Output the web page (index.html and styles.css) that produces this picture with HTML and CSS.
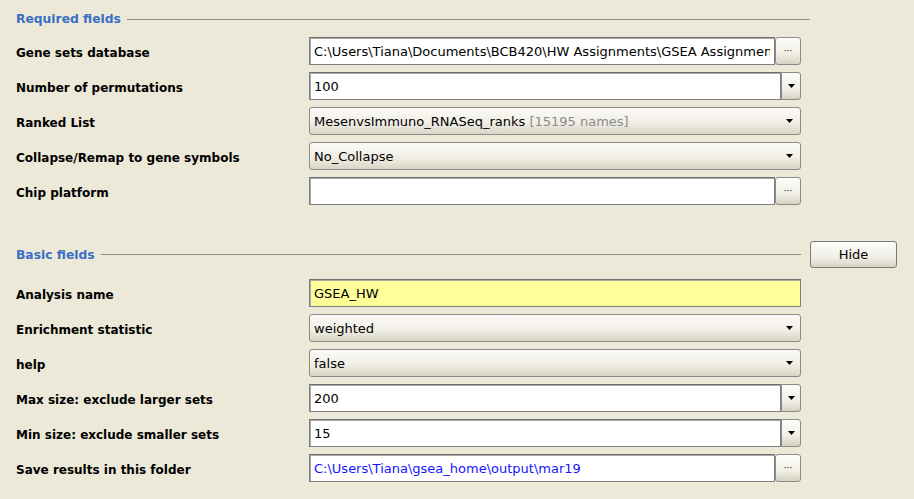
FILE: index.html
```html
<!DOCTYPE html>
<html>
<head>
<meta charset="utf-8">
<link rel="stylesheet" href="styles.css">
</head>
<body>
<div class="panel">
  <div class="section-head req">
    <span class="title">Required fields</span>
    <span class="rule"></span>
  </div>

  <div class="row">
    <div class="label">Gene sets database</div>
    <div class="ctrl">
      <div class="text-field"><span class="clip">C:\Users\Tiana\Documents\BCB420\HW Assignments\GSEA Assignments</span></div>
      <div class="dots-btn"><span>···</span></div>
    </div>
  </div>

  <div class="row">
    <div class="label">Number of permutations</div>
    <div class="ctrl">
      <div class="text-field">100</div>
      <div class="arrow-btn"><svg width="7" height="5" viewBox="0 0 7 5"><path d="M0 0H7L3.5 4Z" fill="#000"/></svg></div>
    </div>
  </div>

  <div class="row">
    <div class="label">Ranked List</div>
    <div class="ctrl">
      <div class="combo"><span>MesenvsImmuno_RNASeq_ranks <span class="muted">[15195 names]</span></span>
        <svg width="7" height="5" viewBox="0 0 7 5"><path d="M0 0H7L3.5 4Z" fill="#000"/></svg></div>
    </div>
  </div>

  <div class="row">
    <div class="label">Collapse/Remap to gene symbols</div>
    <div class="ctrl">
      <div class="combo"><span>No_Collapse</span>
        <svg width="7" height="5" viewBox="0 0 7 5"><path d="M0 0H7L3.5 4Z" fill="#000"/></svg></div>
    </div>
  </div>

  <div class="row">
    <div class="label">Chip platform</div>
    <div class="ctrl">
      <div class="text-field"></div>
      <div class="dots-btn"><span>···</span></div>
    </div>
  </div>

  <div class="section-head basic">
    <span class="title">Basic fields</span>
    <span class="rule short"></span>
    <button class="hide-btn">Hide</button>
  </div>

  <div class="row">
    <div class="label">Analysis name</div>
    <div class="ctrl">
      <div class="text-field yellow">GSEA_HW</div>
    </div>
  </div>

  <div class="row">
    <div class="label">Enrichment statistic</div>
    <div class="ctrl">
      <div class="combo"><span>weighted</span>
        <svg width="7" height="5" viewBox="0 0 7 5"><path d="M0 0H7L3.5 4Z" fill="#000"/></svg></div>
    </div>
  </div>

  <div class="row">
    <div class="label">help</div>
    <div class="ctrl">
      <div class="combo"><span>false</span>
        <svg width="7" height="5" viewBox="0 0 7 5"><path d="M0 0H7L3.5 4Z" fill="#000"/></svg></div>
    </div>
  </div>

  <div class="row">
    <div class="label">Max size: exclude larger sets</div>
    <div class="ctrl">
      <div class="text-field">200</div>
      <div class="arrow-btn"><svg width="7" height="5" viewBox="0 0 7 5"><path d="M0 0H7L3.5 4Z" fill="#000"/></svg></div>
    </div>
  </div>

  <div class="row">
    <div class="label">Min size: exclude smaller sets</div>
    <div class="ctrl">
      <div class="text-field">15</div>
      <div class="arrow-btn"><svg width="7" height="5" viewBox="0 0 7 5"><path d="M0 0H7L3.5 4Z" fill="#000"/></svg></div>
    </div>
  </div>

  <div class="row">
    <div class="label">Save results in this folder</div>
    <div class="ctrl">
      <div class="text-field blue">C:\Users\Tiana\gsea_home\output\mar19</div>
      <div class="dots-btn"><span>···</span></div>
    </div>
  </div>
</div>
</body>
</html>
```

FILE: styles.css
```css
html, body {
  margin: 0;
  padding: 0;
  background: #ece9d8;
  font-family: "DejaVu Sans", Tahoma, sans-serif;
  font-size: 12px;
  color: #000;
  overflow: hidden;
}

.panel {
  width: 914px;
  height: 499px;
  padding: 11px 0 0 16px;
  box-sizing: border-box;
}

.section-head {
  display: flex;
  align-items: center;
  width: 794px;
}

.section-head.req {
  height: 16px;
  margin-bottom: 10px;
}

.section-head.basic {
  height: 27px;
  margin-top: 36px;
  margin-bottom: 11px;
  width: 881px;
}

.title {
  color: #3a6ec6;
  font-weight: bold;
  font-size: 12.3px;
  white-space: nowrap;
}

.rule {
  flex: 1;
  height: 0;
  border-top: 1px solid #8d8d8d;
  margin-left: 6px;
}

.rule.short {
  flex: none;
  width: 700px;
}

.hide-btn {
  margin-left: auto;
  width: 87px;
  height: 27px;
  font-family: "DejaVu Sans", Tahoma, sans-serif;
  font-size: 13px;
  color: #000;
  border: 1px solid #7a7a7a;
  border-radius: 3px;
  background: linear-gradient(#fcfcf9, #f0efe6 60%, #d8d4c4);
  padding: 0;
}

.row {
  display: flex;
  align-items: center;
  height: 28px;
  margin-bottom: 7px;
}

.label {
  width: 293px;
  font-weight: bold;
  white-space: nowrap;
  padding-top: 3px;
}

.ctrl {
  display: flex;
  width: 492px;
  height: 28px;
  font-size: 13px;
}

.text-field {
  flex: 1;
  min-width: 0;
  box-sizing: border-box;
  height: 28px;
  background: #fff;
  border: 1px solid #7f7f7f;
  border-top-color: #6f6f6f;
  box-shadow: inset 1px 1px 0 #a8a8a8;
  padding: 1px 4px 0 4px;
  display: flex;
  align-items: center;
  overflow: hidden;
  white-space: nowrap;
}

.text-field .clip {
  overflow: hidden;
  white-space: nowrap;
  text-overflow: clip;
}

.text-field.yellow {
  background: #ffff99;
}

.text-field.blue {
  color: #1515ff;
}

.dots-btn {
  width: 26px;
  height: 28px;
  box-sizing: border-box;
  border: 1px solid #8a8a8a;
  border-radius: 3px;
  background: linear-gradient(#fdfdfa, #f1efe6 60%, #d6d2c2);
  display: flex;
  align-items: center;
  justify-content: center;
  font-size: 9px;
  color: #000;
}

.arrow-btn {
  width: 20px;
  height: 28px;
  box-sizing: border-box;
  border: 1px solid #8a8a8a;
  border-radius: 0 3px 3px 0;
  background: linear-gradient(#fdfdfa, #f1efe6 60%, #d6d2c2);
  display: flex;
  align-items: center;
  justify-content: center;
}

.combo {
  flex: 1;
  height: 28px;
  box-sizing: border-box;
  border: 1px solid #8a8a8a;
  border-radius: 3px;
  background: linear-gradient(#fbfaf6, #f1efe6 55%, #d9d5c6);
  display: flex;
  align-items: center;
  justify-content: space-between;
  padding: 1px 7px 0 4px;
  white-space: nowrap;
}

.muted {
  color: #8a8a8a;
}
```
